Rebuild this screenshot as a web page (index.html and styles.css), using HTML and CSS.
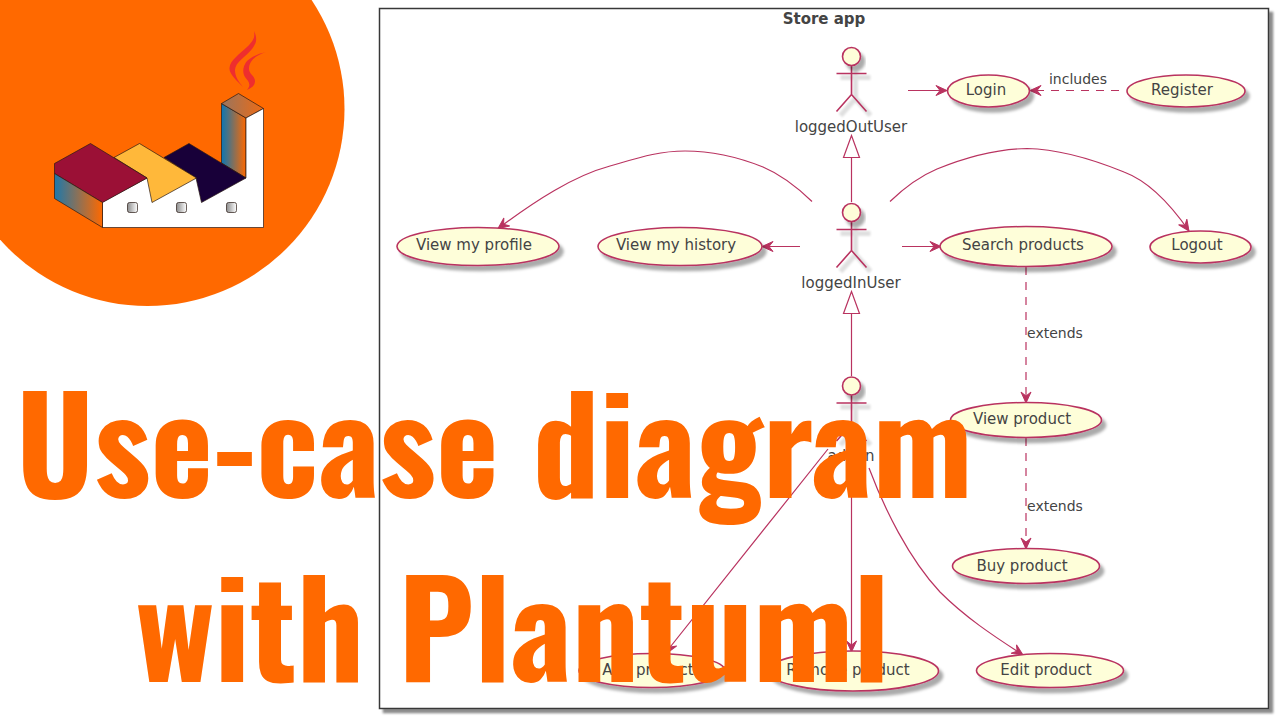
FILE: index.html
```
<!DOCTYPE html>
<html lang="en">
<head>
<meta charset="utf-8">
<meta name="viewport" content="width=device-width, initial-scale=1">
<title>Use-case diagram with Plantuml</title>
<link rel="stylesheet" href="styles.css">
</head>
<body>
<main class="cover">
<svg class="canvas" viewBox="0 0 1280 720" role="img" aria-label="Store app use-case diagram">
  <defs>
    <linearGradient id="wall"><stop offset="0" stop-color="#0c76b4"/><stop offset="1" stop-color="#ff6900"/></linearGradient>
    <linearGradient id="side"><stop offset="0" stop-color="#1d78ab"/><stop offset="1" stop-color="#ff6900"/></linearGradient>
    <linearGradient id="top"><stop offset="0" stop-color="#98755f"/><stop offset="1" stop-color="#ee6b14"/></linearGradient>
    <linearGradient id="glass"><stop offset="0" stop-color="#8c8c8c"/><stop offset="1" stop-color="#fff"/></linearGradient>
    <filter id="shadow" x="-20%" y="-20%" width="150%" height="170%"><feDropShadow dx="4" dy="5" stdDeviation="1.5" flood-color="#000" flood-opacity=".33"/></filter>
    <filter id="soft" filterUnits="userSpaceOnUse" x="-30" y="0" width="70" height="80"><feGaussianBlur stdDeviation="1"/></filter>
    <filter id="frame-shadow" filterUnits="userSpaceOnUse" x="370" y="0" width="910" height="720"><feDropShadow dx="4" dy="4" stdDeviation="1.3" flood-color="#000" flood-opacity=".45"/></filter>
    <marker id="arrow" viewBox="-13 -6 14 12" refX="0" refY="0" markerWidth="14" markerHeight="12" markerUnits="userSpaceOnUse" orient="auto"><path class="head" d="M0 0-11-5-7 0-11 5Z"/></marker>
    <g id="actor">
      <path class="actor-shadow" d="M4 14V42M-11 21H19M4 42-11 59M4 42 19 59"/>
      <path class="limb" d="M0 9V38M-15 17H15M0 38-15 55M0 38 15 55"/>
      <circle class="node" r="9"/>
    </g>
  </defs>

  <circle class="disc" cx="147.500" cy="109" r="197"/>
  <g class="factory">
    <path fill="url(#wall)" d="M221.500 103.500 246 118V178L221.500 163Z"/>
    <path fill="url(#top)" d="M221.500 103.500 238.500 93.500 263.500 108.500 246 118Z"/>
    <path fill="#fff" d="M102.500 227.500V202L147 178 196 178 246 178V118L263.500 108.500V227.500Z"/>
    <path fill="#180039" d="M164 157.500 189 143.500 246 178 201.500 202.500 196 178Z"/>
    <path fill="#ffb83a" d="M114 157.500 139.500 143.500 196.500 178 152 202.500 147 178Z"/>
    <path fill="#9b1036" d="M54.500 163.500 90.500 143.500 147 178 102.500 202.500 54.500 173.500Z"/>
    <path fill="url(#side)" d="M54.500 173.500 102.500 202.500V227.500L54.500 198.500Z"/>
    <g fill="url(#glass)"><rect x="127.500" y="202.500" width="10" height="10" rx="2"/><rect x="176.500" y="202.500" width="10" height="10" rx="2"/><rect x="226.500" y="202.500" width="10" height="10" rx="2"/></g>
  </g>
  <path class="smoke" d="M254 31C258 39 256 44 252 49 246 57 235 62 235 70 235 77 239 82 243 87 236 80 229 74 229.500 68 230 60 240 54 247 47 254 40 255 37 254 31ZM265.500 52C255 56 249 61 249 69 249 74 255 76 255 81 255 86 251 88 247 90 252 84 248 81 245 77 242 72 243 66 247 61 251 57 258 54 265.500 52Z"/>

  <rect class="frame" x="379.500" y="8.500" width="889" height="700"/>

  <g class="links">
    <path d="M908 90.500H947" marker-end="url(#arrow)"/>
    <path class="dashed" d="M1119 90.500H1030" marker-end="url(#arrow)"/>
    <path d="M812 201.500C797 187 782 175 763 167 738 157 713 151 685 151 658 151 638 158 610 166 573 176 535 201 498 228.500" marker-end="url(#arrow)"/>
    <path d="M890 201.500C903 189 918 177 937 169 969 156 998 149 1027 148.500 1056 149 1092 159 1124 172 1148 181 1171 205 1189 231" marker-end="url(#arrow)"/>
    <path d="M800 246.500H762" marker-end="url(#arrow)"/>
    <path d="M902 246.500H941" marker-end="url(#arrow)"/>
    <path class="dashed" d="M1026 267V403" marker-end="url(#arrow)"/>
    <path class="dashed" d="M1026 438V549" marker-end="url(#arrow)"/>
    <path d="M851.500 202V157M843.500 157.500H859.500L851.500 135.500Z"/>
    <path d="M851.500 376V313M843.500 313.500H859.500L851.500 291.500Z"/>
    <path d="M828 449 671 646 667 653" marker-end="url(#arrow)"/>
    <path d="M851.500 464V652" marker-end="url(#arrow)"/>
    <path d="M869 468C884 508 909 559 940 592 965 617 992 635 1023 655" marker-end="url(#arrow)"/>
  </g>

  <g class="cases">
    <ellipse class="node" cx="988.500" cy="91" rx="41" ry="16"/>
    <ellipse class="node" cx="1186" cy="91" rx="59" ry="16"/>
    <ellipse class="node" cx="478" cy="246.500" rx="81" ry="19"/>
    <ellipse class="node" cx="680" cy="246.500" rx="82" ry="19"/>
    <ellipse class="node" cx="1026" cy="246.500" rx="86" ry="20"/>
    <ellipse class="node" cx="1200.500" cy="247" rx="50.500" ry="16"/>
    <ellipse class="node" cx="1026" cy="420" rx="75.500" ry="17.500"/>
    <ellipse class="node" cx="1026" cy="566" rx="73.500" ry="17.500"/>
    <ellipse class="node" cx="652" cy="670.500" rx="73" ry="17"/>
    <ellipse class="node" cx="853" cy="671" rx="85.500" ry="20"/>
    <ellipse class="node" cx="1050" cy="670.500" rx="73.500" ry="17"/>
  </g>
  <use href="#actor" x="851.500" y="56.500"/>
  <use href="#actor" x="851.500" y="212.500"/>
  <use href="#actor" x="851.500" y="386"/>

  <g class="label">
    <text class="title" x="824" y="24">Store app</text>
    <text x="851" y="132">loggedOutUser</text>
    <text x="851" y="288">loggedInUser</text>
    <text x="851" y="461">admin</text>
    <text x="986" y="95">Login</text>
    <text x="1182" y="95">Register</text>
    <text x="474" y="250">View my profile</text>
    <text x="676" y="250">View my history</text>
    <text x="1023" y="250">Search products</text>
    <text x="1197" y="250">Logout</text>
    <text x="1022" y="424">View product</text>
    <text x="1022" y="571">Buy product</text>
    <text x="648" y="675">Add product</text>
    <text x="848" y="675">Remove product</text>
    <text x="1046" y="675">Edit product</text>
    <text class="note" x="1078" y="84">includes</text>
    <text class="note" x="1055" y="338">extends</text>
    <text class="note" x="1055" y="511">extends</text>
  </g>
</svg>
<h1 class="headline">Use-case diagram<br><span class="second">with Plantuml</span></h1>
</main>
</body>
</html>
```
FILE: styles.css
```
body {
  margin: 0;
  background: #fff;
}

.cover {
  display: grid;
  align-items: end;
  overflow: hidden;
}

.canvas,
.headline {
  grid-area: 1 / 1;
}

.canvas {
  display: block;
  width: 100%;
  height: auto;
}

.headline {
  justify-self: start;
  margin: 0 0 6px 16px;
  color: #ff6900;
  font: 700 133px/184px "Oswald", "Roboto Condensed", sans-serif;
  text-align: center;
  white-space: nowrap;
}

.second {
  padding-left: 36px;
}

.disc {
  fill: #ff6900;
}

.factory {
  stroke: #291a14;
  stroke-width: .7;
  stroke-linejoin: round;
}

.smoke {
  fill: #ee2e2e;
}

.frame {
  fill: #fff;
  stroke: #383838;
  stroke-width: 1.5;
  filter: url(#frame-shadow);
}

.links {
  fill: none;
  stroke: #b93360;
  stroke-width: 1.2;
}

.dashed {
  stroke-dasharray: 8 7;
}

.head {
  fill: #b93360;
  stroke: #b93360;
  stroke-width: 1;
}

.node {
  fill: #fefed9;
  stroke: #b93360;
  stroke-width: 1.6;
  filter: url(#shadow);
}

.limb {
  fill: none;
  stroke: #b93360;
  stroke-width: 1.6;
}

.actor-shadow {
  fill: none;
  stroke: #000;
  stroke-width: 5;
  opacity: .12;
  filter: url(#soft);
}

.label {
  fill: #444;
  font: 15px "DejaVu Sans", sans-serif;
  text-anchor: middle;
}

.title {
  font-weight: 700;
}

.note {
  font-size: 14px;
}
```
